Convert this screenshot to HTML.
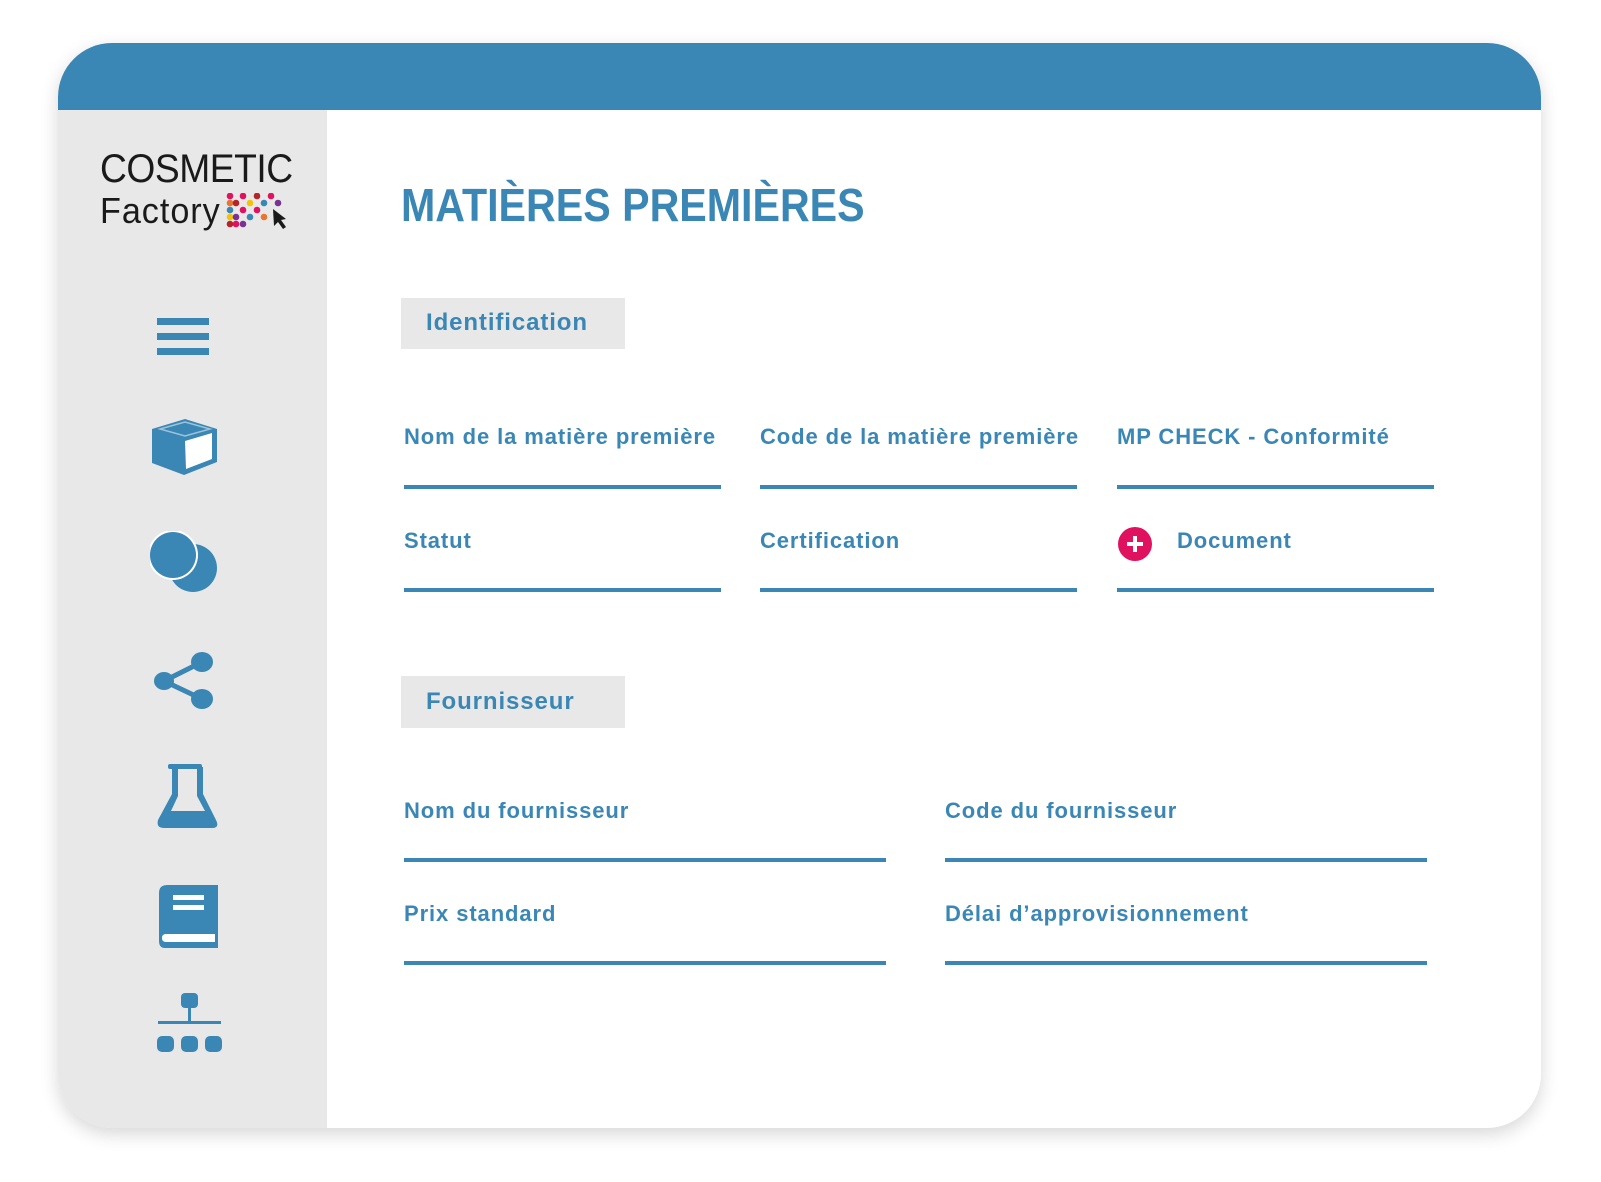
<!DOCTYPE html>
<html><head><meta charset="utf-8"><style>
*{margin:0;padding:0;box-sizing:border-box}
body{width:1601px;height:1182px;background:#fff;position:relative;overflow:hidden;font-family:"Liberation Sans",sans-serif}
.card{position:absolute;left:58px;top:43px;width:1483px;height:1085px;border-radius:54px;overflow:hidden;background:#fff;box-shadow:0 6px 18px rgba(0,0,0,.16)}
.hdr{position:absolute;left:0;top:0;width:100%;height:67px;background:#3a87b5}
.side{position:absolute;left:0;top:67px;width:269px;bottom:0;background:#e8e8e8}
.a{position:absolute}
.t{position:absolute;color:#3a87b5;font-weight:bold;white-space:nowrap}
.lbl{font-size:22px;letter-spacing:.9px}
.ln{position:absolute;height:4px;background:#3a87b5}
.box{position:absolute;background:#e8e8e8}
</style></head><body>
<div class="card"><div class="hdr"></div><div class="side"></div></div>

<!-- logo -->
<div class="a" style="left:100px;top:147px;font-size:40px;color:#1a1a1a;letter-spacing:-.5px;transform:scaleX(.93);transform-origin:left;white-space:nowrap">COSMETIC</div>
<div class="a" style="left:100px;top:190px;font-size:36px;color:#1a1a1a;letter-spacing:1px;transform:scaleX(.95);transform-origin:left">Factory</div>
<svg class="a" style="left:226px;top:193px" width="70" height="40" viewBox="0 0 70 40">
<g>
<circle cx="4" cy="3" r="3.3" fill="#e0115f"/><circle cx="17" cy="3" r="3.3" fill="#e0115f"/><circle cx="31" cy="3" r="3.3" fill="#b8222a"/><circle cx="45" cy="3" r="3.3" fill="#e0115f"/>
<circle cx="4" cy="10" r="3.3" fill="#e8772e"/><circle cx="10" cy="10" r="3.3" fill="#b8222a"/><circle cx="24" cy="10" r="3.3" fill="#f4c20d"/><circle cx="38" cy="10" r="3.3" fill="#3a87b5"/><circle cx="52" cy="10" r="3.3" fill="#7b3294"/>
<circle cx="4" cy="17" r="3.3" fill="#3a87b5"/><circle cx="17" cy="17" r="3.3" fill="#e0115f"/><circle cx="31" cy="17" r="3.3" fill="#e0115f"/>
<circle cx="4" cy="24" r="3.3" fill="#f4c20d"/><circle cx="10" cy="24" r="3.3" fill="#7b3294"/><circle cx="24" cy="24" r="3.3" fill="#3a87b5"/><circle cx="38" cy="24" r="3.3" fill="#e8772e"/>
<circle cx="4" cy="31" r="3.3" fill="#b8222a"/><circle cx="10" cy="31" r="3.3" fill="#e0115f"/><circle cx="17" cy="31" r="3.3" fill="#7b3294"/>
<path d="M47 16 L60 26 L55 27 L60 34 L57 36 L52 29 L48 33 Z" fill="#1a1a1a"/>
</g></svg>

<!-- sidebar icons -->
<svg class="a" style="left:157px;top:318px" width="52" height="37"><rect y="0" width="52" height="7" fill="#3a87b5"/><rect y="15" width="52" height="7" fill="#3a87b5"/><rect y="30" width="52" height="7" fill="#3a87b5"/></svg>
<svg class="a" style="left:152px;top:417px" width="66" height="60" viewBox="0 0 66 60"><path d="M0 12 L33 2 L65 12 L65 45 L32 58 L0 46 Z" fill="#3a87b5"/><path d="M33 24 L60 16 L60 42 L34 52 Z" fill="#fff"/><path d="M8 12 L33 5 L58 12 L33 19 Z" fill="none" stroke="#fff" stroke-width="1.5" opacity=".5"/></svg>
<svg class="a" style="left:150px;top:531px" width="70" height="62" viewBox="0 0 70 62"><circle cx="43" cy="37" r="24" fill="#3a87b5"/><circle cx="23" cy="24" r="25" fill="#fff"/><circle cx="23" cy="24" r="23" fill="#3a87b5"/></svg>
<svg class="a" style="left:154px;top:651px" width="60" height="60" viewBox="0 0 60 60"><path d="M10 30 L48 11 M10 30 L48 48" stroke="#3a87b5" stroke-width="5"/><ellipse cx="10" cy="30" rx="10" ry="9" fill="#3a87b5"/><ellipse cx="48" cy="11" rx="11" ry="10" fill="#3a87b5"/><ellipse cx="48" cy="48" rx="11" ry="10" fill="#3a87b5"/></svg>
<svg class="a" style="left:157px;top:764px" width="62" height="66" viewBox="0 0 62 66"><rect x="11" y="0" width="34" height="5" rx="2" fill="#3a87b5"/><path d="M15 3 V30 L1 56 Q-1 64 7 64 H55 Q63 64 59 56 L46 30 V3 H40 V32 L48 47 H14 L21 32 V3 Z" fill="#3a87b5"/></svg>
<svg class="a" style="left:159px;top:885px" width="62" height="64" viewBox="0 0 62 64"><path d="M8 0 H59 V63 H6 Q0 63 0 56 V8 Q0 0 8 0 Z" fill="#3a87b5"/><rect x="14" y="10" width="31" height="5" fill="#fff"/><rect x="14" y="20" width="31" height="5" fill="#fff"/><path d="M7 49 H56 V57 H7 Q3 57 3 53 Q3 49 7 49 Z" fill="#fff"/></svg>
<svg class="a" style="left:157px;top:993px" width="68" height="62" viewBox="0 0 68 62"><rect x="24" y="0" width="17" height="15" rx="4" fill="#3a87b5"/><rect x="31" y="14" width="3" height="16" fill="#3a87b5"/><rect x="1" y="28" width="63" height="3" fill="#3a87b5"/><rect x="0" y="43" width="17" height="16" rx="5" fill="#3a87b5"/><rect x="24" y="43" width="17" height="16" rx="5" fill="#3a87b5"/><rect x="48" y="43" width="17" height="16" rx="5" fill="#3a87b5"/></svg>

<!-- title -->
<div class="t" style="left:401px;top:179px;font-size:46px;line-height:53px;transform:scaleX(.895);transform-origin:left">MATIÈRES PREMIÈRES</div>

<div class="box" style="left:401px;top:298px;width:224px;height:51px"></div>
<div class="t" style="left:426px;top:309px;font-size:24px;letter-spacing:.9px">Identification</div>

<div class="t lbl" style="left:404px;top:424px">Nom de la matière première</div>
<div class="t lbl" style="left:760px;top:424px">Code de la matière première</div>
<div class="t lbl" style="left:1117px;top:424px">MP CHECK - Conformité</div>
<div class="ln" style="left:404px;top:485px;width:317px"></div>
<div class="ln" style="left:760px;top:485px;width:317px"></div>
<div class="ln" style="left:1117px;top:485px;width:317px"></div>

<div class="t lbl" style="left:404px;top:528px">Statut</div>
<div class="t lbl" style="left:760px;top:528px">Certification</div>
<svg class="a" style="left:1118px;top:527px" width="34" height="34"><circle cx="17" cy="17" r="17" fill="#e0115f"/><rect x="9" y="15" width="16" height="4" fill="#fff"/><rect x="15" y="9" width="4" height="16" fill="#fff"/></svg>
<div class="t lbl" style="left:1177px;top:528px">Document</div>
<div class="ln" style="left:404px;top:588px;width:317px"></div>
<div class="ln" style="left:760px;top:588px;width:317px"></div>
<div class="ln" style="left:1117px;top:588px;width:317px"></div>

<div class="box" style="left:401px;top:676px;width:224px;height:52px"></div>
<div class="t" style="left:426px;top:688px;font-size:24px;letter-spacing:.9px">Fournisseur</div>

<div class="t lbl" style="left:404px;top:798px">Nom du fournisseur</div>
<div class="t lbl" style="left:945px;top:798px">Code du fournisseur</div>
<div class="ln" style="left:404px;top:858px;width:482px"></div>
<div class="ln" style="left:945px;top:858px;width:482px"></div>

<div class="t lbl" style="left:404px;top:901px">Prix standard</div>
<div class="t lbl" style="left:945px;top:901px">Délai d’approvisionnement</div>
<div class="ln" style="left:404px;top:961px;width:482px"></div>
<div class="ln" style="left:945px;top:961px;width:482px"></div>
</body></html>
